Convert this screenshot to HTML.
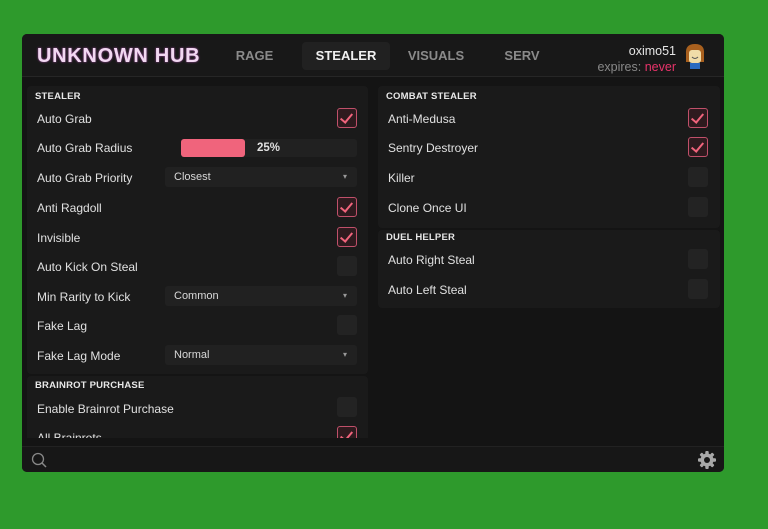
<html><head><style>
*{margin:0;padding:0;box-sizing:border-box}
body{width:768px;height:529px;overflow:hidden;background:#2e9a2c;font-family:"Liberation Sans",sans-serif;position:relative}
.win{position:absolute;left:22px;top:34px;width:702px;height:438px;background:#141414;border-radius:5px;overflow:hidden}
.hdr{position:absolute;left:0;top:0;width:702px;height:43px;background:#181818;border-bottom:1px solid #262626}
.logo{position:absolute;left:15px;top:11px;font-size:20px;font-weight:bold;color:#f2d8f2;text-shadow:0 0 2px #a04aa0;letter-spacing:0.7px}
.tab{position:absolute;top:8px;height:28px;line-height:28px;font-size:13px;font-weight:bold;color:#8a8a8a;text-align:center}
.tab.on{background:#212121;color:#f0f0f0;border-radius:4px}
.user{position:absolute;right:48px;top:9px;text-align:right;font-size:12.5px;color:#e6e6e6;line-height:16px}
.user span{color:#888}.user b{color:#e8336a;font-weight:normal}
.av{position:absolute;right:18px;top:8px;width:22px;height:28px}
.panel{position:absolute;background:#1a1a1a;border-radius:4px;overflow:hidden}
.sec{position:absolute;font-size:9.5px;font-weight:bold;color:#e8e8e8;letter-spacing:.2px}
.row{position:absolute;font-size:12px;color:#e0e0e0}
.cb{position:absolute;width:20px;height:20px;border-radius:3px;background:#232323}
.cb.on{background:#2e1a1e;border:1px solid #c0506a}
.cb.on:after{content:"";position:absolute;left:5px;top:2px;width:5px;height:10px;border:solid #f0647c;border-width:0 2px 2px 0;transform:rotate(40deg)}
.dd{position:absolute;left:138px;width:192px;height:20px;background:#212121;border-radius:3px;font-size:11px;color:#d8d8d8;line-height:20px;padding-left:9px}
.dd:after{content:"▾";position:absolute;right:10px;top:0;font-size:8px;color:#999}
.bot{position:absolute;left:0;top:412px;width:702px;height:26px;background:#171717;border-top:1px solid #222}
</style></head><body>
<div class="win">
 <div class="hdr">
  <div class="logo">UNKNOWN HUB</div>
  <div class="tab" style="left:205px;width:55px">RAGE</div>
  <div class="tab on" style="left:280px;width:88px">STEALER</div>
  <div class="tab" style="left:384px;width:60px">VISUALS</div>
  <div class="tab" style="left:478px;width:44px">SERV</div>
  <div class="user">oximo51<br><span>expires: </span><b>never</b></div>
  <svg class="av" viewBox="0 0 22 28"><path d="M2 12 Q1 2 11 2 Q21 2 20 12 L20 20 L2 20Z" fill="#a8601e"/><rect x="5" y="8" width="12" height="13" rx="3" fill="#f0dca8"/><path d="M8 15 Q11 18 14 15" stroke="#555" fill="none" stroke-width="1"/><rect x="6" y="21" width="10" height="6" fill="#2a6ac0"/></svg>
 </div>
 <div class="panel" style="left:5px;top:52px;width:341px;height:288px">
  <div class="sec" style="left:8px;top:5px">STEALER</div>
  <div class="row" style="left:10px;top:26px">Auto Grab</div><div class="cb on" style="left:310px;top:22px"></div>
  <div class="row" style="left:10px;top:55px">Auto Grab Radius</div>
  <div style="position:absolute;left:154px;top:53px;width:176px;height:18px;background:#212121;border-radius:3px"></div>
  <div style="position:absolute;left:154px;top:53px;width:64px;height:18px;background:#f0647c;border-radius:3px"></div>
  <div class="row" style="left:230px;top:56px;font-weight:bold;font-size:11.5px">25%</div>
  <div class="row" style="left:10px;top:85px">Auto Grab Priority</div><div class="dd" style="top:81px">Closest</div>
  <div class="row" style="left:10px;top:115px">Anti Ragdoll</div><div class="cb on" style="left:310px;top:111px"></div>
  <div class="row" style="left:10px;top:145px">Invisible</div><div class="cb on" style="left:310px;top:141px"></div>
  <div class="row" style="left:10px;top:174px">Auto Kick On Steal</div><div class="cb" style="left:310px;top:170px"></div>
  <div class="row" style="left:10px;top:204px">Min Rarity to Kick</div><div class="dd" style="top:200px">Common</div>
  <div class="row" style="left:10px;top:233px">Fake Lag</div><div class="cb" style="left:310px;top:229px"></div>
  <div class="row" style="left:10px;top:263px">Fake Lag Mode</div><div class="dd" style="top:259px">Normal</div>
 </div>
 <div class="panel" style="left:5px;top:342px;width:341px;height:62px;border-radius:4px 4px 0 0">
  <div class="sec" style="left:8px;top:4px">BRAINROT PURCHASE</div>
  <div class="row" style="left:10px;top:26px">Enable Brainrot Purchase</div><div class="cb" style="left:310px;top:21px"></div>
  <div class="row" style="left:10px;top:55px">All Brainrots</div><div class="cb on" style="left:310px;top:50px"></div>
 </div>
 <div class="panel" style="left:356px;top:52px;width:342px;height:142px">
  <div class="sec" style="left:8px;top:5px">COMBAT STEALER</div>
  <div class="row" style="left:10px;top:26px">Anti-Medusa</div><div class="cb on" style="left:310px;top:22px"></div>
  <div class="row" style="left:10px;top:55px">Sentry Destroyer</div><div class="cb on" style="left:310px;top:51px"></div>
  <div class="row" style="left:10px;top:85px">Killer</div><div class="cb" style="left:310px;top:81px"></div>
  <div class="row" style="left:10px;top:115px">Clone Once UI</div><div class="cb" style="left:310px;top:111px"></div>
 </div>
 <div class="panel" style="left:356px;top:196px;width:342px;height:78px">
  <div class="sec" style="left:8px;top:2px">DUEL HELPER</div>
  <div class="row" style="left:10px;top:23px">Auto Right Steal</div><div class="cb" style="left:310px;top:19px"></div>
  <div class="row" style="left:10px;top:53px">Auto Left Steal</div><div class="cb" style="left:310px;top:49px"></div>
 </div>
 <div class="bot">
  <svg style="position:absolute;left:9px;top:5px" width="16" height="16" viewBox="0 0 16 16"><circle cx="7" cy="7" r="5.5" fill="none" stroke="#888" stroke-width="1.3"/><path d="M11 11l4 4" stroke="#888" stroke-width="1.5"/></svg>
  <svg style="position:absolute;left:675px;top:3px" width="20" height="20" viewBox="0 0 20 20"><g fill="#a8a8a8"><circle cx="10" cy="10" r="6.5"/><rect x="8.3" y="1" width="3.4" height="18" rx="1"/><rect x="8.3" y="1" width="3.4" height="18" rx="1" transform="rotate(45 10 10)"/><rect x="8.3" y="1" width="3.4" height="18" rx="1" transform="rotate(90 10 10)"/><rect x="8.3" y="1" width="3.4" height="18" rx="1" transform="rotate(135 10 10)"/></g><circle cx="10" cy="10" r="3" fill="#171717"/></svg>
 </div>
</div>
</body></html>
